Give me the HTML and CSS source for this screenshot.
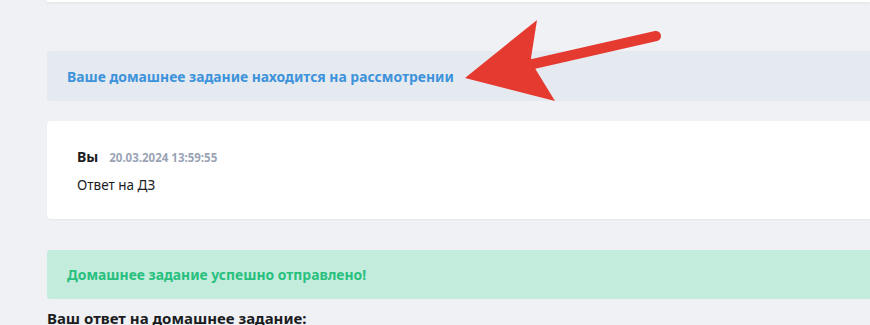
FILE: index.html
```html
<!DOCTYPE html>
<html lang="ru">
<head>
<meta charset="utf-8">
<link rel="stylesheet" href="styles.css">
</head>
<body>
<div class="page">
  <div class="top-card"></div>
  <div class="notice notice-info">Ваше домашнее задание находится на рассмотрении</div>
  <div class="comment">
    <div class="comment-head"><span class="author">Вы</span><span class="date">20.03.2024 13:59:55</span></div>
    <div class="comment-text">Ответ на ДЗ</div>
  </div>
  <div class="notice notice-success">Домашнее задание успешно отправлено!</div>
  <div class="answer-title">Ваш ответ на домашнее задание:</div>
</div>
<svg class="arrow" width="870" height="325" viewBox="0 0 870 325">
  <polygon points="465,78 537,20 531,58 536,70 555,101" fill="#e53a30"/>
  <line x1="533" y1="64" x2="656" y2="36" stroke="#e53a30" stroke-width="10" stroke-linecap="round"/>
</svg>
</body>
</html>
```
FILE: styles.css
```css
html, body {
  margin: 0;
  padding: 0;
  background: #f0f1f5;
  overflow: hidden;
  height: 325px;
}
.page {
  padding-left: 47px;
  font-family: "Noto Sans", "Open Sans", sans-serif;
}
.top-card {
  height: 2px;
  background: #fff;
  box-shadow: 0 1px 3px rgba(0,0,0,0.08);
  margin-bottom: 49px;
}
.notice {
  height: 50px;
  box-sizing: border-box;
  padding-left: 20px;
  display: flex;
  align-items: center;
  font-size: 13.9px;
  font-weight: 700;
  border-radius: 3px 0 0 3px;
}
.notice-info {
  background: #e5e9f0;
  color: #3d93db;
  margin-bottom: 20px;
}
.comment {
  background: #fff;
  border-radius: 4px 0 0 4px;
  height: 98px;
  box-sizing: border-box;
  padding: 26px 30px 0;
  box-shadow: 0 1px 2px rgba(0,0,0,0.05);
  margin-bottom: 31px;
}
.comment-head {
  display: flex;
  align-items: baseline;
  gap: 11px;
}
.author {
  font-size: 14px;
  font-weight: 700;
  color: #1c1c1f;
}
.date {
  font-size: 11.5px;
  font-weight: 700;
  color: #9aa4b6;
}
.comment-text {
  margin-top: 10px;
  font-size: 13.5px;
  color: #1c1c1f;
}
.notice-success {
  background: #c4ecdd;
  color: #28c07e;
  height: 49px;
  margin-bottom: 9px;
}
.answer-title {
  font-size: 15px;
  font-weight: 700;
  color: #1c1c1f;
}
.arrow {
  position: absolute;
  left: 0;
  top: 0;
}
```
